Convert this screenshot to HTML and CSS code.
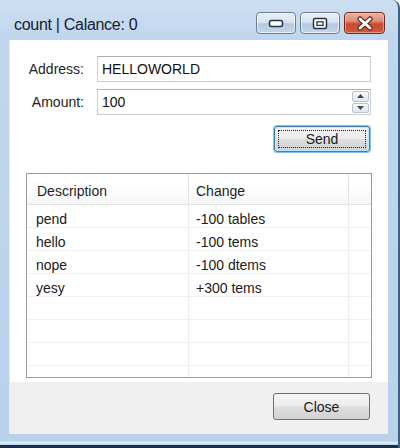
FILE: index.html
```html
<!DOCTYPE html>
<html>
<head>
<meta charset="utf-8">
<link rel="stylesheet" href="styles.css">
</head>
<body>
<div class="window">
  <div class="titlebar">
    <div class="title">count | Calance: 0</div>
    <div class="caption-buttons">
      <div class="cap-btn">
        <svg width="16" height="9" viewBox="0 0 16 9"><rect x="1.5" y="1.5" width="13" height="6" rx="2" fill="#fff" stroke="#24344a" stroke-width="1.5"/></svg>
      </div>
      <div class="cap-btn">
        <svg width="16" height="13" viewBox="0 0 16 13"><rect x="1.5" y="1.5" width="13" height="10" rx="1.5" fill="#fff" stroke="#24344a" stroke-width="1.5"/><rect x="5" y="4.8" width="6" height="3.6" fill="#fff" stroke="#24344a" stroke-width="1.3"/></svg>
      </div>
      <div class="cap-btn close">
        <svg width="20" height="15" viewBox="0 0 20 15"><path d="M5 3 L15 12 M15 3 L5 12" stroke="#4a1a10" stroke-width="5" stroke-linecap="round"/><path d="M5 3 L15 12 M15 3 L5 12" stroke="#fff" stroke-width="3" stroke-linecap="round"/></svg>
      </div>
    </div>
  </div>
  <div class="client">
    <div class="top">
      <div class="form-row">
        <label class="label">Address:</label>
        <div class="textbox">HELLOWORLD</div>
      </div>
      <div class="form-row">
        <label class="label">Amount:</label>
        <div class="textbox numeric">
          <span>100</span>
          <div class="spinner">
            <div class="spin up"><svg width="7" height="4" viewBox="0 0 7 4"><path d="M0 4 L3.5 0 L7 4 Z" fill="#3a4a60"/></svg></div>
            <div class="spin down"><svg width="7" height="4" viewBox="0 0 7 4"><path d="M0 0 L3.5 4 L7 0 Z" fill="#3a4a60"/></svg></div>
          </div>
        </div>
      </div>
      <div class="send-row">
        <div class="btn focused">Send</div>
      </div>
      <div class="listview">
        <div class="lv-header">
          <div class="col c1">Description</div>
          <div class="col c2">Change</div>
          <div class="col c3"></div>
        </div>
        <div class="lv-body">
          <div class="lv-row"><div class="cell c1">pend</div><div class="cell c2">-100 tables</div><div class="cell c3"></div></div>
          <div class="lv-row"><div class="cell c1">hello</div><div class="cell c2">-100 tems</div><div class="cell c3"></div></div>
          <div class="lv-row"><div class="cell c1">nope</div><div class="cell c2">-100 dtems</div><div class="cell c3"></div></div>
          <div class="lv-row"><div class="cell c1">yesy</div><div class="cell c2">+300 tems</div><div class="cell c3"></div></div>
          <div class="lv-row"><div class="cell c1"></div><div class="cell c2"></div><div class="cell c3"></div></div>
          <div class="lv-row"><div class="cell c1"></div><div class="cell c2"></div><div class="cell c3"></div></div>
          <div class="lv-row"><div class="cell c1"></div><div class="cell c2"></div><div class="cell c3"></div></div>
          <div class="lv-row"><div class="cell c1"></div><div class="cell c2"></div><div class="cell c3"></div></div>
        </div>
      </div>
    </div>
    <div class="bottom">
      <div class="btn close-btn">Close</div>
    </div>
  </div>
  <div class="bottom-frame"></div>
</div>
</body>
</html>
```
FILE: styles.css
```css
html, body {
  margin: 0;
  padding: 0;
  background: #ffffff;
}
body {
  font-family: "Liberation Sans", Arial, sans-serif;
  font-size: 14px;
  color: #1b1b1b;
}
.window {
  width: 400px;
  height: 448px;
  box-sizing: border-box;
  display: flex;
  flex-direction: column;
  background: linear-gradient(to bottom, #cddff2 0px, #c0d6ee 40px, #b9d1eb 100%);
  border-right: 2px solid #3d5f82;
  border-top-right-radius: 8px;
  overflow: hidden;
}
.titlebar {
  height: 40px;
  box-sizing: border-box;
  padding: 12px 13px 6px 14px;
  display: flex;
  align-items: center;
  justify-content: space-between;
}
.title {
  font-size: 16px;
  color: #15202e;
  letter-spacing: -0.3px;
  margin-top: 3px;
}
.caption-buttons {
  display: flex;
  gap: 4px;
  align-self: stretch;
}
.cap-btn {
  width: 40px;
  height: 22px;
  box-sizing: border-box;
  border: 1px solid #6a7e99;
  border-radius: 4px;
  background: linear-gradient(to bottom, #e9f0f8 0%, #d8e3f0 45%, #b7c9df 55%, #c6d6ea 100%);
  display: flex;
  align-items: center;
  justify-content: center;
  box-shadow: inset 0 0 0 1px rgba(255,255,255,0.6);
}
.cap-btn.close {
  width: 41px;
  border-color: #6e2a1d;
  background: linear-gradient(to bottom, #eab1a3 0%, #df8e78 40%, #c94a30 55%, #d0583c 100%);
  box-shadow: inset 0 0 0 1px rgba(255,210,200,0.5);
}
.client {
  flex: 1;
  margin: 0 10px 0 9px;
  display: flex;
  flex-direction: column;
  background: #f0f0f0;
  border-left: 1px solid #e4edf7;
}
.top {
  background: #ffffff;
  padding: 16px 0 4px 0;
  display: flex;
  flex-direction: column;
}
.form-row {
  display: grid;
  grid-template-columns: 74px 274px;
  column-gap: 13px;
  align-items: center;
  height: 26px;
  margin-bottom: 7px;
}
.label {
  text-align: right;
  color: #1e1e1e;
}
.textbox {
  height: 26px;
  box-sizing: border-box;
  border: 1px solid #c9ced6;
  border-top-color: #abadb3;
  padding: 0 4px;
  display: flex;
  align-items: center;
  color: #111;
  background: #fff;
}
.numeric {
  justify-content: space-between;
  padding-right: 1px;
}
.spinner {
  width: 17px;
  height: 22px;
  display: flex;
  flex-direction: column;
  gap: 1px;
}
.spin {
  flex: 1;
  border: 1px solid #b9c2ce;
  border-radius: 2px;
  background: linear-gradient(to bottom, #f7f9fb, #e2e7ee);
  display: flex;
  align-items: center;
  justify-content: center;
}
.send-row {
  display: flex;
  justify-content: flex-end;
  padding-right: 18px;
  margin-top: 4px;
}
.btn {
  width: 96px;
  height: 26px;
  box-sizing: border-box;
  border: 1px solid #707070;
  border-radius: 3px;
  background: linear-gradient(to bottom, #f4f4f4 0%, #ececec 48%, #dedede 52%, #d2d2d2 100%);
  display: flex;
  align-items: center;
  justify-content: center;
  color: #1b1b1b;
  position: relative;
}
.btn.focused {
  border-color: #3c7fb1;
  box-shadow: 0 0 0 1px #7cc3ef, inset 0 0 0 1px #c8e6fa;
}
.btn.focused::after {
  content: "";
  position: absolute;
  inset: 3px;
  border: 1px dotted #222;
}
.listview {
  margin: 21px 16px 0 16px;
  height: 205px;
  box-sizing: border-box;
  border: 1px solid #9a9a9a;
  overflow: hidden;
  background: #fff;
}
.lv-header {
  display: flex;
  height: 31px;
  box-sizing: border-box;
  border-bottom: 1px solid #e2e2e2;
  background: linear-gradient(to bottom, #ffffff 0%, #ffffff 40%, #f4f5f7 100%);
}
.col {
  display: flex;
  align-items: center;
  padding-left: 9px;
  padding-top: 3px;
  box-sizing: border-box;
  border-right: 1px solid #e2e3ea;
  color: #1e1e1e;
}
.c1 { width: 162px; }
.c2 { width: 160px; padding-left: 7px; }
.c3 { flex: 1; border-right: none; }
.col.c1 { padding-left: 10px; }
.lv-body {
  display: flex;
  flex-direction: column;
}
.lv-row {
  display: flex;
  height: 23px;
  box-sizing: border-box;
  border-bottom: 1px solid #f0f0f0;
}
.cell {
  display: flex;
  align-items: center;
  padding-left: 9px;
  padding-top: 5px;
  box-sizing: border-box;
  border-right: 1px solid #ededed;
}
.cell.c2 { padding-left: 7px; }
.cell.c3 { border-right: none; }
.bottom {
  flex: 1;
  display: flex;
  justify-content: flex-end;
  align-items: flex-start;
  padding: 11px 18px 0 0;
}
.close-btn {
  width: 97px;
  height: 27px;
}
.bottom-frame {
  height: 14px;
  box-sizing: border-box;
  border-bottom: 3px solid #1c2f44;
  background: linear-gradient(to bottom, #b9d1eb 0%, #b9d1eb 60%, #d7f3fb 80%, #b9d1eb 100%);
}
```
